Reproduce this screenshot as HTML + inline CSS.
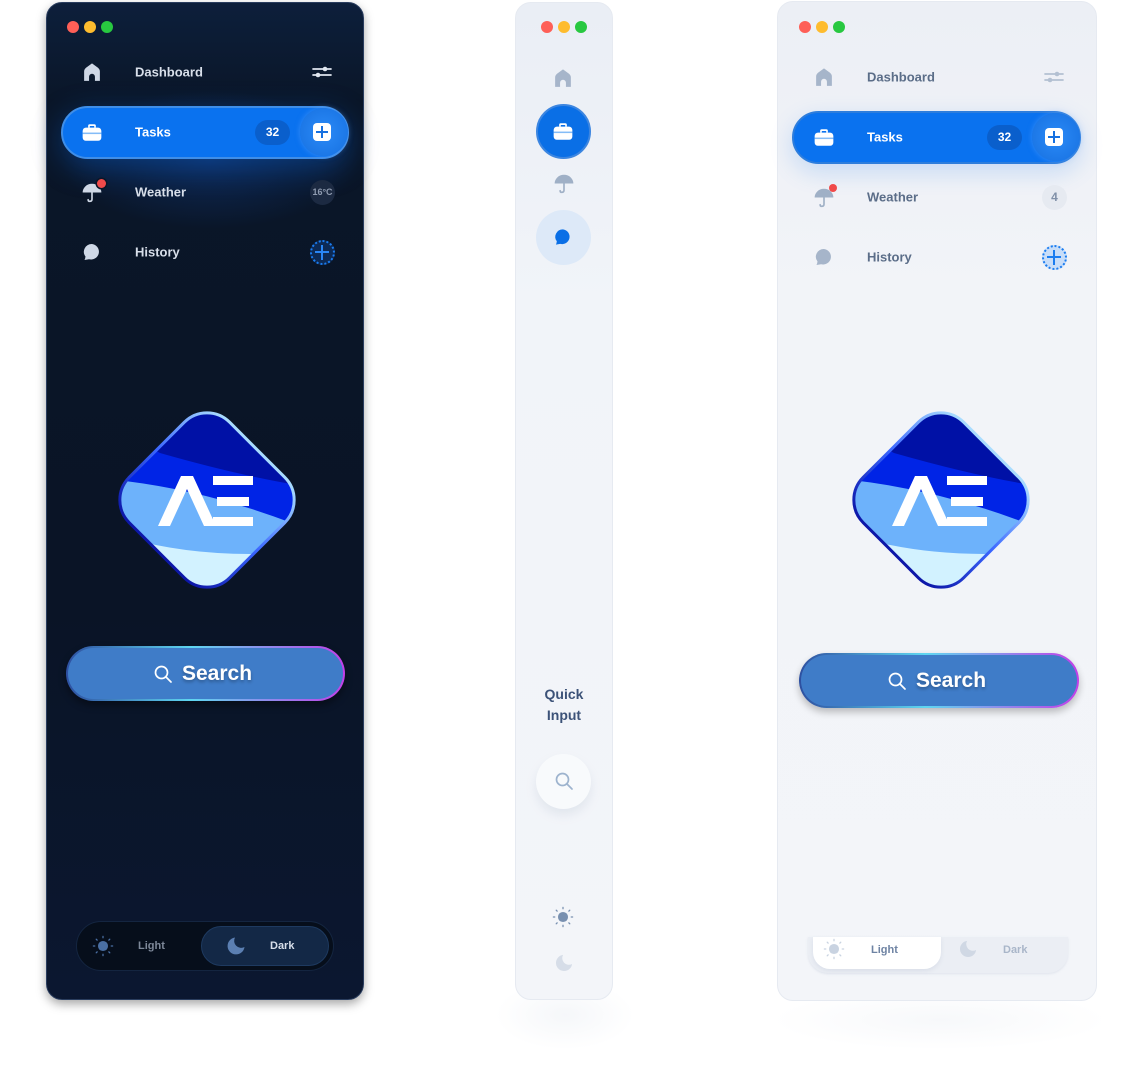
<!DOCTYPE html>
<html><head><meta charset="utf-8"><style>
*{box-sizing:border-box;margin:0;padding:0}
body{width:1142px;height:1065px;background:#fff;position:relative;overflow:hidden;font-family:"Liberation Sans",sans-serif;font-weight:bold}
.a{position:absolute}
.panel{position:absolute;border-radius:16px}
.dots span{position:absolute;width:12px;height:12px;border-radius:50%}
.lbl{position:absolute;font-size:13px;transform:translateY(-50%)}
.ic{position:absolute;transform:translate(-50%,-50%)}
</style></head><body>
<svg width="0" height="0" style="position:absolute">
<defs>
<symbol id="home" viewBox="0 0 20 20"><path d="M2.5 9.5 Q2.5 7.5 4.3 6 L10 1.8 L15.7 6 Q17.5 7.5 17.5 9.5 V18.5 H12.8 V14.5 a2.8 2.8 0 0 0 -5.6 0 V18.5 H2.5 Z"/></symbol>
<symbol id="case" viewBox="0 0 20 20"><path d="M6.5 6 V4.5 Q6.5 3 8 3 H12 Q13.5 3 13.5 4.5 V6 H12 V4.6 H8 V6 Z"/><rect x="1.5" y="6" width="17" height="12" rx="3"/><rect x="1.5" y="10.5" width="17" height="1.4" fill="#0a7aef" opacity=".5"/></symbol>
<symbol id="umb" viewBox="0 0 20 20"><path d="M1.5 10.5 A8.5 8 0 0 1 18.5 10.5 Z"/><path d="M10 10 V16.5 Q10 18.5 8 18.5 Q6.5 18.5 6.5 17" fill="none" stroke="currentColor" stroke-width="1.5" stroke-linecap="round"/></symbol>
<symbol id="chat" viewBox="0 0 20 20"><path d="M10 2 A8 7.8 0 1 1 7 17.3 L2.5 18 Q3.2 17 3.5 14.5 A8 7.8 0 0 1 10 2 Z"/></symbol>
<symbol id="sun" viewBox="0 0 24 24"><circle cx="12" cy="12" r="5.5"/><g stroke="currentColor" stroke-width="1.4" stroke-linecap="round"><path d="M12 1.5v1.5M12 21v1.5M1.5 12h1.5M21 12h1.5M4.6 4.6l1 1M18.4 18.4l1 1M4.6 19.4l1-1M18.4 5.6l1-1"/></g></symbol>
<symbol id="moon" viewBox="0 0 20 20"><path d="M9 1.5 A7 7 0 0 0 18.5 11 A8.5 8.5 0 1 1 9 1.5 Z"/></symbol>
<symbol id="search" viewBox="0 0 20 20"><circle cx="8.5" cy="8.5" r="6" fill="none" stroke="currentColor" stroke-width="1.7"/><path d="M13 13l5 5" stroke="currentColor" stroke-width="1.7" stroke-linecap="round"/></symbol>
<symbol id="sliders" viewBox="0 0 22 20"><g stroke="currentColor" stroke-width="1.7" stroke-linecap="round"><path d="M2 7h18M2 13h18"/></g><circle cx="14" cy="7" r="2.3"/><circle cx="7" cy="13" r="2.3"/></symbol>
<linearGradient id="lb" x1="0" y1="0" x2="0" y2="1"><stop offset="0" stop-color="#a9dcff"/><stop offset=".5" stop-color="#3a66ff"/><stop offset="1" stop-color="#0d17a8"/></linearGradient>
<clipPath id="dia"><rect x="-71" y="-71" width="142" height="142" rx="32" transform="rotate(45)"/></clipPath>
<symbol id="logo" viewBox="-90 -90 180 180">
<g clip-path="url(#dia)">
<rect x="-90" y="-90" width="180" height="180" fill="#0024e6"/>
<path d="M-90 -90 H90 V-15 Q30 -25 -47 -47 L-90 -70 Z" fill="#0011a6"/>
<path d="M-90 -20 Q0 -10 90 25 V90 H-90 Z" fill="#6db2fb"/>
<path d="M-90 35 Q-10 60 90 52 V90 H-90 Z" fill="#d2f2ff"/>
</g>
<rect x="-71" y="-71" width="142" height="142" rx="32" transform="rotate(45)" fill="none" stroke="url(#lb)" stroke-width="3"/>
<path d="M-49 26 L-26 -24 H-14 L9 26 H-3 L-20 -11 L-37 26 Z" fill="#fff"/>
<path d="M6 -24 H46 V-15 H6 Z M10 -3 H42 V6 H10 Z M6 17 H46 V26 H6 Z" fill="#fff"/>
</symbol>
</defs></svg>

<!-- DARK PANEL -->
<div class="panel" style="left:46px;top:2px;width:318px;height:998px;background:linear-gradient(180deg,#0d1f3b 0%,#0a1628 10%,#0a1426 60%,#0b1730 100%);border:1px solid #2a3d5e;box-shadow:0 4px 10px rgba(0,0,0,.35)"></div>
<div class="a" style="left:60px;top:90px;width:300px;height:140px;background:radial-gradient(ellipse at 50% 50%,rgba(20,80,180,.35),rgba(10,20,40,0) 70%)"></div>
<div class="dots"><span style="left:67px;top:21px;background:#fe5f57"></span><span style="left:84px;top:21px;background:#febc2e"></span><span style="left:101px;top:21px;background:#28c840"></span></div>
<svg class="ic" style="left:92px;top:72px" width="21" height="21" fill="#cfd8e6"><use href="#home"/></svg>
<div class="lbl" style="left:135px;top:72px;color:#d8dfea">Dashboard</div>
<svg class="ic" style="left:322px;top:72px" width="22" height="20" fill="#e0e6ef" color="#e0e6ef"><use href="#sliders"/></svg>
<div class="a" style="left:61px;top:106px;width:288px;height:53px;border-radius:27px;background:#0a72ef;border:2px solid #3f8ee8;box-shadow:0 8px 30px rgba(10,110,240,.35)"></div>
<svg class="ic" style="left:92px;top:132px" width="22" height="22" fill="#fff"><use href="#case"/></svg>
<div class="lbl" style="left:135px;top:132px;color:#fff">Tasks</div>
<div class="a" style="left:255px;top:120px;width:35px;height:25px;border-radius:13px;background:#0a5fcc;color:#fff;font-size:12px;text-align:center;line-height:25px">32</div>
<div class="a" style="left:300px;top:108px;width:48px;height:48px;border-radius:50%;background:radial-gradient(circle,#2b8af7,#1670e0);box-shadow:0 0 6px rgba(100,170,255,.5)"></div>
<div class="a" style="left:313px;top:123px;width:18px;height:18px;border-radius:4px;background:#fff"></div>
<div class="a" style="left:321px;top:126px;width:2px;height:12px;background:#1670e0"></div><div class="a" style="left:316px;top:131px;width:12px;height:2px;background:#1670e0"></div>
<svg class="ic" style="left:92px;top:192px" width="22" height="22" fill="#cfd8e6" color="#cfd8e6"><use href="#umb"/></svg>
<div class="a" style="left:97px;top:179px;width:9px;height:9px;border-radius:50%;background:#f04a4a;box-shadow:0 0 0 1.5px #0a1628"></div>
<div class="lbl" style="left:135px;top:192px;color:#d8dfea">Weather</div>
<div class="a" style="left:310px;top:180px;width:25px;height:25px;border-radius:50%;background:#1c2a42;color:#8f9bb0;font-size:9px;text-align:center;line-height:25px">16°C</div>
<svg class="ic" style="left:92px;top:252px" width="20" height="20" fill="#cfd8e6"><use href="#chat"/></svg>
<div class="lbl" style="left:135px;top:252px;color:#d8dfea">History</div>
<div class="a" style="left:310px;top:240px;width:25px;height:25px;border-radius:50%;border:2px dotted #1a7cf0;background:#0d2a55"></div>
<div class="a" style="left:321px;top:245px;width:2px;height:15px;background:#2a86f5"></div><div class="a" style="left:315px;top:251px;width:14px;height:2px;background:#2a86f5"></div>
<svg class="a" style="left:117px;top:410px" width="180" height="180"><use href="#logo"/></svg>
<div class="a" style="left:66px;top:646px;width:279px;height:55px;border-radius:28px;background:linear-gradient(#3f7cc8,#3f7cc8) padding-box,linear-gradient(90deg,#2d4fa0,#5fd6f0 45%,#c23fe8) border-box;border:2.5px solid transparent;box-shadow:0 4px 8px rgba(0,0,0,.4)"></div>
<svg class="ic" style="left:163px;top:674px" width="20" height="20" color="#fff"><use href="#search"/></svg>
<div class="lbl" style="left:182px;top:674px;color:#fff;font-size:21px;text-shadow:0 2px 3px rgba(0,0,0,.3)">Search</div>
<div class="a" style="left:76px;top:921px;width:258px;height:50px;border-radius:25px;background:#060e1b;border:1.5px solid #142540"></div>
<svg class="ic" style="left:103px;top:946px" width="22" height="22" fill="#4a6fa3" color="#4a6fa3"><use href="#sun"/></svg>
<div class="lbl" style="left:138px;top:946px;color:#7d8899;font-size:11px">Light</div>
<div class="a" style="left:201px;top:926px;width:128px;height:40px;border-radius:20px;background:#132846;border:1.5px solid #1e3a60"></div>
<svg class="ic" style="left:236px;top:946px" width="20" height="20" fill="#5b7fb2"><use href="#moon"/></svg>
<div class="lbl" style="left:270px;top:946px;color:#d8dfea;font-size:11px">Dark</div>

<!-- MIDDLE PANEL -->
<div class="a" style="left:495px;top:980px;width:140px;height:70px;border-radius:50%;background:radial-gradient(ellipse,rgba(200,210,225,.18),rgba(255,255,255,0) 70%)"></div>
<div class="panel" style="left:515px;top:2px;width:98px;height:998px;background:linear-gradient(180deg,#eaeef5,#f1f4f9 30%,#f3f5f9);border:1px solid #e6eaf1"></div>
<div class="dots"><span style="left:541px;top:21px;background:#fe5f57"></span><span style="left:558px;top:21px;background:#febc2e"></span><span style="left:575px;top:21px;background:#28c840"></span></div>
<svg class="ic" style="left:563px;top:78px" width="21" height="21" fill="#a6b5ca"><use href="#home"/></svg>
<div class="a" style="left:536px;top:104px;width:55px;height:55px;border-radius:50%;background:#0a6fe6;border:2px solid #3d86e0"></div>
<svg class="ic" style="left:563px;top:131px" width="22" height="22" fill="#fff"><use href="#case"/></svg>
<svg class="ic" style="left:564px;top:183px" width="22" height="22" fill="#9fb0c6" color="#9fb0c6"><use href="#umb"/></svg>
<div class="a" style="left:536px;top:210px;width:55px;height:55px;border-radius:50%;background:#dde9f8"></div>
<svg class="ic" style="left:563px;top:237px" width="19" height="19" fill="#0a6fe6"><use href="#chat"/></svg>
<div class="a" style="left:515px;top:684px;width:98px;text-align:center;color:#3c5278;font-size:14px;line-height:21px">Quick<br>Input</div>
<div class="a" style="left:536px;top:754px;width:55px;height:55px;border-radius:50%;background:#f8fafc;box-shadow:0 6px 10px rgba(150,165,190,.18)"></div>
<svg class="ic" style="left:564px;top:781px" width="20" height="20" color="#9db3ce"><use href="#search"/></svg>
<svg class="ic" style="left:563px;top:917px" width="22" height="22" fill="#7890b0" color="#7890b0"><use href="#sun"/></svg>
<svg class="ic" style="left:564px;top:963px" width="19" height="19" fill="#d6dde8"><use href="#moon"/></svg>

<!-- RIGHT PANEL -->
<div class="a" style="left:770px;top:990px;width:340px;height:60px;border-radius:50%;background:radial-gradient(ellipse,rgba(200,210,225,.15),rgba(255,255,255,0) 70%)"></div>
<div class="panel" style="left:777px;top:1px;width:320px;height:1000px;background:linear-gradient(180deg,#eceff5,#f2f4f8 30%,#f3f5f9);border:1px solid #e6eaf1"></div>
<div class="dots"><span style="left:799px;top:21px;background:#fe5f57"></span><span style="left:816px;top:21px;background:#febc2e"></span><span style="left:833px;top:21px;background:#28c840"></span></div>
<svg class="ic" style="left:824px;top:77px" width="21" height="21" fill="#a6b5ca"><use href="#home"/></svg>
<div class="lbl" style="left:867px;top:77px;color:#5b6d88">Dashboard</div>
<svg class="ic" style="left:1054px;top:77px" width="22" height="20" fill="#b3c0d2" color="#b3c0d2"><use href="#sliders"/></svg>
<div class="a" style="left:792px;top:111px;width:289px;height:53px;border-radius:27px;background:#0a72ef;border:2px solid #2d7ddc;box-shadow:0 8px 24px rgba(10,110,240,.18)"></div>
<svg class="ic" style="left:824px;top:137px" width="22" height="22" fill="#fff"><use href="#case"/></svg>
<div class="lbl" style="left:867px;top:137px;color:#fff">Tasks</div>
<div class="a" style="left:987px;top:125px;width:35px;height:25px;border-radius:13px;background:#0a5fcc;color:#fff;font-size:12px;text-align:center;line-height:25px">32</div>
<div class="a" style="left:1032px;top:113px;width:48px;height:48px;border-radius:50%;background:radial-gradient(circle,#2b8af7,#1670e0);box-shadow:0 0 6px rgba(100,170,255,.5)"></div>
<div class="a" style="left:1045px;top:128px;width:18px;height:18px;border-radius:4px;background:#fff"></div>
<div class="a" style="left:1053px;top:131px;width:2px;height:12px;background:#1670e0"></div><div class="a" style="left:1048px;top:136px;width:12px;height:2px;background:#1670e0"></div>
<svg class="ic" style="left:824px;top:197px" width="22" height="22" fill="#9fb0c6" color="#9fb0c6"><use href="#umb"/></svg>
<div class="a" style="left:829px;top:184px;width:8px;height:8px;border-radius:50%;background:#f04a4a"></div>
<div class="lbl" style="left:867px;top:197px;color:#5b6d88">Weather</div>
<div class="a" style="left:1042px;top:185px;width:25px;height:25px;border-radius:50%;background:#e6eaf1;color:#8090a8;font-size:12px;text-align:center;line-height:25px">4</div>
<svg class="ic" style="left:824px;top:257px" width="20" height="20" fill="#a6b5ca"><use href="#chat"/></svg>
<div class="lbl" style="left:867px;top:257px;color:#5b6d88">History</div>
<div class="a" style="left:1042px;top:245px;width:25px;height:25px;border-radius:50%;border:2px dotted #1a7cf0;background:#c8ddf8"></div>
<div class="a" style="left:1053px;top:250px;width:2px;height:15px;background:#1a7cf0"></div><div class="a" style="left:1047px;top:256px;width:14px;height:2px;background:#1a7cf0"></div>
<svg class="a" style="left:851px;top:410px" width="180" height="180"><use href="#logo"/></svg>
<div class="a" style="left:799px;top:653px;width:280px;height:55px;border-radius:28px;background:linear-gradient(#3f7cc8,#3f7cc8) padding-box,linear-gradient(90deg,#2d4fa0,#5fd6f0 45%,#c23fe8) border-box;border:2.5px solid transparent;box-shadow:0 4px 8px rgba(0,0,0,.25)"></div>
<svg class="ic" style="left:897px;top:681px" width="20" height="20" color="#fff"><use href="#search"/></svg>
<div class="lbl" style="left:916px;top:681px;color:#fff;font-size:21px;text-shadow:0 2px 3px rgba(0,0,0,.3)">Search</div>
<div class="a" style="left:808px;top:937px;width:260px;height:36px;border-radius:0 0 20px 20px;background:#ebeef4;box-shadow:0 1px 2px rgba(180,190,210,.3)"></div>
<div class="a" style="left:813px;top:937px;width:128px;height:32px;border-radius:0 0 17px 17px;background:#fff;box-shadow:0 2px 4px rgba(180,190,210,.3)"></div>
<svg class="ic" style="left:834px;top:949px" width="22" height="22" fill="#c9d3e1" color="#c9d3e1"><use href="#sun"/></svg>
<div class="lbl" style="left:871px;top:950px;color:#6e83a3;font-size:11px">Light</div>
<svg class="ic" style="left:968px;top:949px" width="19" height="19" fill="#d0d8e4"><use href="#moon"/></svg>
<div class="lbl" style="left:1003px;top:950px;color:#a9b6c9;font-size:11px">Dark</div>
</body></html>
